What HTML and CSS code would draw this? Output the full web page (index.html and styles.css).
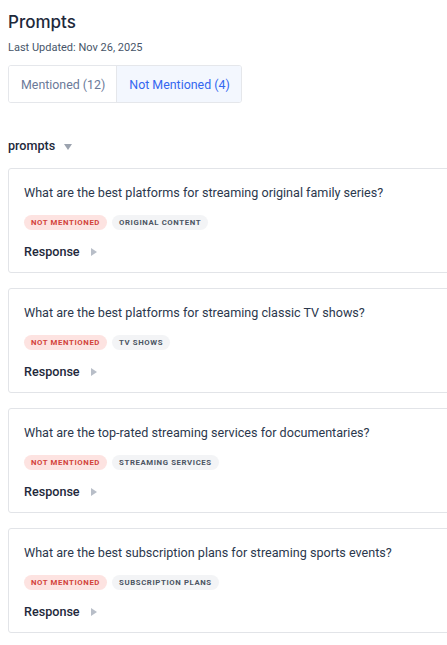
FILE: index.html
```html
<!DOCTYPE html>
<html lang="en">
<head>
<meta charset="UTF-8">
<title>Prompts</title>
<link rel="stylesheet" href="styles.css">
</head>
<body>

<header class="page-head">
    <h1>Prompts</h1>
    <div class="updated">Last Updated: Nov 26, 2025</div>
</header>

<div class="tabs">
    <button class="tab">Mentioned (12)</button>
    <button class="tab active">Not Mentioned (4)</button>
</div>

<div class="group-title">prompts <span class="caret-down"></span></div>

<div class="prompt-list">
    <div class="prompt-card">
        <div class="question">What are the best platforms for streaming original family series?</div>
        <div class="tags">
            <span class="tag miss">Not Mentioned</span>
            <span class="tag">Original Content</span>
        </div>
        <div class="response">Response <span class="caret-right"></span></div>
    </div>

    <div class="prompt-card">
        <div class="question">What are the best platforms for streaming classic TV shows?</div>
        <div class="tags">
            <span class="tag miss">Not Mentioned</span>
            <span class="tag">TV Shows</span>
        </div>
        <div class="response">Response <span class="caret-right"></span></div>
    </div>

    <div class="prompt-card">
        <div class="question">What are the top-rated streaming services for documentaries?</div>
        <div class="tags">
            <span class="tag miss">Not Mentioned</span>
            <span class="tag">Streaming Services</span>
        </div>
        <div class="response">Response <span class="caret-right"></span></div>
    </div>

    <div class="prompt-card">
        <div class="question">What are the best subscription plans for streaming sports events?</div>
        <div class="tags">
            <span class="tag miss">Not Mentioned</span>
            <span class="tag">Subscription Plans</span>
        </div>
        <div class="response">Response <span class="caret-right"></span></div>
    </div>
</div>

</body>
</html>
```

FILE: styles.css
```css
/* --- Page --- */
html { overflow-x: hidden; }

body {
    margin: 0;
    padding: 8px 8px 20px;
    font-family: Roboto, "Liberation Sans", sans-serif;
    color: #1e293b;
    background: #fff;
}

/* --- Header --- */
.page-head h1 {
    margin: 3px 0 0;
    font-family: Inter, Roboto, sans-serif;
    font-size: 17px;
    font-weight: 500;
    line-height: 22px;
    color: #1e293b;
}

.updated {
    margin-top: 8px;
    font-size: 11px;
    line-height: 14px;
    color: #475569;
}

/* --- Tabs --- */
.tabs {
    display: inline-flex;
    margin-top: 10px;
    border: 1px solid #e5e7eb;
    border-radius: 3px;
    overflow: hidden;
}

.tab {
    padding: 0 11px 0 12px;
    height: 36px;
    border: none;
    background: #fff;
    font-family: Roboto, sans-serif;
    font-size: 12.4px;
    color: #6b7a99;
    cursor: pointer;
}
.tab + .tab { border-left: 1px solid #e5e7eb; }
.tab.active {
    background: #f3f7fe;
    color: #3467f0;
}

/* --- Group title --- */
.group-title {
    margin-top: 35px;
    font-size: 12.6px;
    font-weight: 500;
    line-height: 16px;
    display: flex;
    align-items: center;
    gap: 9px;
}

.caret-down {
    width: 0;
    height: 0;
    border-left: 4px solid transparent;
    border-right: 4px solid transparent;
    border-top: 6px solid #9ca3af;
    margin-top: 2px;
}

/* --- Cards --- */
.prompt-list {
    margin-top: 14px;
    display: flex;
    flex-direction: column;
    gap: 15px;
    width: 700px;
}

.prompt-card {
    border: 1px solid #e2e4e8;
    border-radius: 3px;
    padding: 15px 15px 13px;
    height: 105px;
    box-sizing: border-box;
}

.question {
    font-size: 12.6px;
    line-height: 17px;
    color: #2b384d;
}

.tags {
    display: flex;
    gap: 5px;
    margin-top: 14px;
}

.tag {
    display: inline-block;
    padding: 0 7px;
    height: 15px;
    line-height: 15px;
    border-radius: 8px;
    background: #f3f4f6;
    color: #4b5563;
    font-size: 7.8px;
    font-weight: 700;
    letter-spacing: 0.6px;
    text-transform: uppercase;
}
.tag.miss {
    background: #fde3e1;
    color: #d2433b;
}

.response {
    margin-top: 13px;
    font-size: 12.6px;
    font-weight: 500;
    line-height: 17px;
    color: #1e293b;
    display: flex;
    align-items: center;
    gap: 11px;
}

.caret-right {
    width: 0;
    height: 0;
    border-top: 4px solid transparent;
    border-bottom: 4px solid transparent;
    border-left: 6px solid #b8bec8;
}
```
